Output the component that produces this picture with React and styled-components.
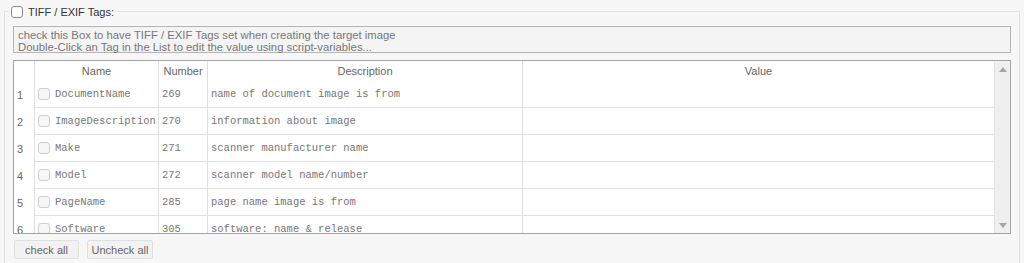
import React from "react";
import styled, { createGlobalStyle } from "styled-components";

const GlobalStyle = createGlobalStyle`
  html, body {
    margin: 0;
    background: #f7f7f7;
  }
  body {
    font-family: "Liberation Sans", Arial, sans-serif;
    font-size: 11px;
    color: #555;
  }
`;

const tags = [
  { id: 1, name: "DocumentName", number: 269, desc: "name of document image is from" },
  { id: 2, name: "ImageDescription", number: 270, desc: "information about image" },
  { id: 3, name: "Make", number: 271, desc: "scanner manufacturer name" },
  { id: 4, name: "Model", number: 272, desc: "scanner model name/number" },
  { id: 5, name: "PageName", number: 285, desc: "page name image is from" },
  { id: 6, name: "Software", number: 305, desc: "software: name & release" },
];

const Fieldset = styled.fieldset`
  margin: 5px 4px 0;
  padding: 8px 8px 10px;
  border: 1px solid #e2e2e2;
  border-bottom: none;
  min-width: 0;
`;

const Legend = styled.legend`
  display: flex;
  align-items: center;
  gap: 5px;
  margin-left: -4px;
  padding: 0 2px;
  height: 13px;
  font-size: 11px;
  color: #333;
`;

const Check = styled.span`
  box-sizing: border-box;
  display: inline-block;
  flex: none;
  width: 12px;
  height: 12px;
  border: 1px solid ${(p) => (p.$strong ? "#8a8a8a" : "#cfcfcf")};
  border-radius: 3px;
  background: ${(p) => (p.$strong ? "#fff" : "#f6f6f6")};
`;

const Info = styled.div`
  box-sizing: border-box;
  height: 27px;
  padding: 2px 4px 0;
  border: 1px solid #b4b4b4;
  background: #f4f4f4;
  color: #777;
  font-size: 11.3px;
  line-height: 12px;
`;

const Table = styled.div`
  display: flex;
  height: 172px;
  margin-top: 7px;
  border: 1px solid #a3a3a3;
  background: #fff;
  overflow: hidden;
`;

const Body = styled.div`
  flex: 1;
  overflow: hidden;
`;

const Row = styled.div`
  display: grid;
  grid-template-columns: 20px 124px 49px 315px 1fr;
  height: ${(p) => (p.$head ? "20px" : "27px")};
`;

const Cell = styled.div`
  box-sizing: border-box;
  display: flex;
  align-items: center;
  gap: 5px;
  padding: 0 3px;
  overflow: hidden;
  white-space: nowrap;
  justify-content: ${(p) => (p.$center ? "center" : "flex-start")};
  border-left: ${(p) => (p.$first ? "none" : "1px solid #e0e0e0")};
  border-bottom: ${(p) => (p.$line ? "1px solid #e0e0e0" : "none")};
  font-family: ${(p) =>
    p.$mono ? '"Liberation Mono", "Courier New", monospace' : "inherit"};
  font-size: ${(p) => (p.$mono ? "10.5px" : "11px")};
  color: ${(p) => (p.$mono ? "#777" : "#666")};
`;

const NameCell = styled(Cell)`
  padding-left: 3px;
`;

const Scrollbar = styled.div`
  box-sizing: border-box;
  width: 16px;
  flex: none;
  display: flex;
  flex-direction: column;
  justify-content: space-between;
  align-items: center;
  padding: 6px 0 5px;
  background: #efefef;
  border-left: 1px solid #e2e2e2;
`;

const Arrow = styled.span`
  width: 0;
  height: 0;
  border-left: 4px solid transparent;
  border-right: 4px solid transparent;
  ${(p) =>
    p.$down ? "border-top: 5px solid #a6a6a6;" : "border-bottom: 5px solid #a6a6a6;"}
`;

const Buttons = styled.div`
  display: flex;
  gap: 8px;
  margin-top: 6px;
  padding-left: 1px;
`;

const Button = styled.button`
  box-sizing: border-box;
  width: ${(p) => p.$w}px;
  height: 19px;
  padding: 0;
  border: 1px solid #e0e0e0;
  border-radius: 2px;
  background: #f2f2f2;
  color: #666;
  font-family: inherit;
  font-size: 11px;
`;

function App() {
  return (
    <>
      <GlobalStyle />
      <Fieldset>
        <Legend>
          <Check $strong />
          TIFF / EXIF Tags:
        </Legend>
        <Info>
          check this Box to have TIFF / EXIF Tags set when creating the target image
          <br />
          Double-Click an Tag in the List to edit the value using script-variables...
        </Info>
        <Table>
          <Body>
            <Row $head>
              <Cell $first />
              <Cell $center>Name</Cell>
              <Cell $center>Number</Cell>
              <Cell $center>Description</Cell>
              <Cell $center>Value</Cell>
            </Row>
            {tags.map((t) => (
              <Row key={t.id}>
                <Cell $first>{t.id}</Cell>
                <NameCell $line $mono>
                  <Check />
                  {t.name}
                </NameCell>
                <Cell $line $mono>{t.number}</Cell>
                <Cell $line $mono>{t.desc}</Cell>
                <Cell $line />
              </Row>
            ))}
          </Body>
          <Scrollbar>
            <Arrow />
            <Arrow $down />
          </Scrollbar>
        </Table>
        <Buttons>
          <Button $w={65}>check all</Button>
          <Button $w={66}>Uncheck all</Button>
        </Buttons>
      </Fieldset>
    </>
  );
}

export default App;
